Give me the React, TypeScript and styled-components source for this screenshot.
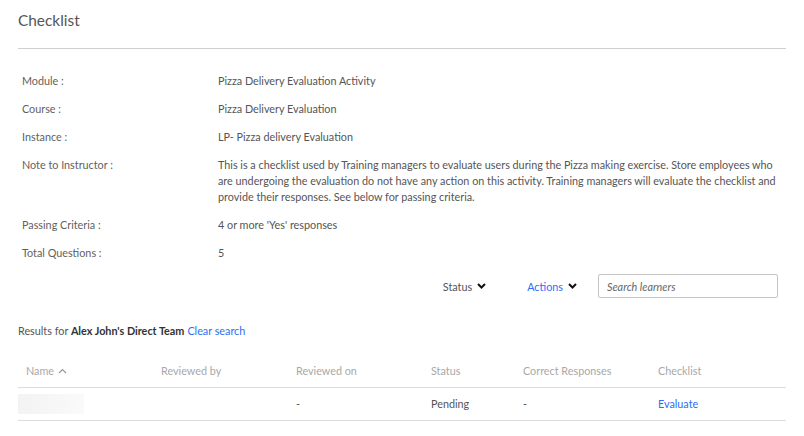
import React from 'react';
import styled, { createGlobalStyle } from 'styled-components';

const GlobalStyle = createGlobalStyle`
	body {
		margin: 0;
		background: #fff;
		font-family: 'Lato', 'Noto Sans', sans-serif;
		color: #555;
	}
`;

const Page = styled.div`
	padding: 0 18px;
	width: 768px;
`;

const Header = styled.div`
	height: 48px;
	border-bottom: 1px solid #cfcfcf;
	display: flex;
	align-items: center;
`;

const Title = styled.h1`
	margin: 0 0 8px;
	font-size: 15.4px;
	font-weight: 400;
	color: #555;
`;

const InfoGrid = styled.dl`
	margin: 24px 0 0 4px;
	display: grid;
	grid-template-columns: 196px 1fr;
	row-gap: 12px;
	font-size: 10.8px;
	line-height: 16px;
`;

const Label = styled.dt`
	color: #5f5f5f;
`;

const Value = styled.dd`
	margin: 0;
	color: #555;
`;

const Toolbar = styled.div`
	margin-top: 13px;
	display: flex;
	justify-content: flex-end;
	align-items: center;
	padding-right: 8px;
	font-size: 10.8px;
`;

const Dropdown = styled.button<{ $link?: boolean }>`
	border: none;
	background: none;
	padding: 0;
	font: inherit;
	display: flex;
	align-items: center;
	gap: 5px;
	color: ${(p) => (p.$link ? '#2f6df6' : '#555')};
	margin-right: ${(p) => (p.$link ? '21px' : '41px')};
	cursor: pointer;
`;

const SearchInput = styled.input`
	box-sizing: border-box;
	width: 180px;
	height: 24px;
	border: 1px solid #c4c4c4;
	border-radius: 2px;
	padding: 0 8px;
	font: italic 10.8px 'Lato', 'Noto Sans', sans-serif;
	color: #555;
	&::placeholder {
		color: #666;
	}
`;

const Results = styled.p`
	margin: 25px 0 0;
	font-size: 10.8px;
	line-height: 16px;
	color: #555;

	b {
		color: #333;
		font-weight: 700;
	}
`;

const ClearLink = styled.a`
	color: #2f6df6;
	text-decoration: none;
	margin-left: 3px;
`;

const Table = styled.table`
	margin-top: 15px;
	width: 768px;
	border-collapse: collapse;
	table-layout: fixed;
	font-size: 10.8px;
`;

const Th = styled.th`
	height: 33px;
	padding: 0 8px;
	text-align: left;
	font-weight: 400;
	color: #a8a8a8;
	border-bottom: 1px solid #dcdcdc;
`;

const Td = styled.td`
	height: 31px;
	padding: 0 8px 1px;
	color: #555;
	border-bottom: 1px solid #dcdcdc;
`;

const HiddenName = styled.div`
	margin-left: -8px;
	width: 66px;
	height: 20px;
	background: linear-gradient(90deg, #f3f3f3, #f7f7f7 60%, #fafafa);
	filter: blur(0.5px);
`;

const EvaluateLink = styled.a`
	color: #2f6df6;
	text-decoration: none;
`;

const HeadLabel = styled.span`
	display: inline-flex;
	align-items: center;
	gap: 4px;
`;

const Chevron = ({ up, color = '#111', width = 2 }: { up?: boolean; color?: string; width?: number }) => (
	<svg width="9" height="6" viewBox="0 0 9 6">
		<polyline
			points={up ? '1,5 4.5,1.5 8,5' : '1,1 4.5,4.5 8,1'}
			fill="none"
			stroke={color}
			strokeWidth={width}
		/>
	</svg>
);

const info: [string, React.ReactNode][] = [
	['Module :', 'Pizza Delivery Evaluation Activity'],
	['Course :', 'Pizza Delivery Evaluation'],
	['Instance :', 'LP- Pizza delivery Evaluation'],
	[
		'Note to Instructor :',
		'This is a checklist used by Training managers to evaluate users during the Pizza making exercise. Store employees who are undergoing the evaluation do not have any action on this activity. Training managers will evaluate the checklist and provide their responses. See below for passing criteria.',
	],
	['Passing Criteria :', "4 or more 'Yes' responses"],
	['Total Questions :', '5'],
];

const App = () => {
	return (
		<Page>
			<GlobalStyle />
			<Header>
				<Title>Checklist</Title>
			</Header>
			<InfoGrid>
				{info.map(([k, v]) => (
					<React.Fragment key={k}>
						<Label>{k}</Label>
						<Value>{v}</Value>
					</React.Fragment>
				))}
			</InfoGrid>
			<Toolbar>
				<Dropdown>
					Status <Chevron />
				</Dropdown>
				<Dropdown $link>
					Actions <Chevron />
				</Dropdown>
				<SearchInput placeholder="Search learners" />
			</Toolbar>
			<Results>
				Results for <b>Alex John's Direct Team</b>
				<ClearLink href="#">Clear search</ClearLink>
			</Results>
			<Table>
				<colgroup>
					<col style={{ width: 135 }} />
					<col style={{ width: 135 }} />
					<col style={{ width: 135 }} />
					<col style={{ width: 92 }} />
					<col style={{ width: 135 }} />
					<col />
				</colgroup>
				<thead>
					<tr>
						<Th>
							<HeadLabel>
								Name <Chevron up color="#999" width={1.2} />
							</HeadLabel>
						</Th>
						<Th>Reviewed by</Th>
						<Th>Reviewed on</Th>
						<Th>Status</Th>
						<Th>Correct Responses</Th>
						<Th>Checklist</Th>
					</tr>
				</thead>
				<tbody>
					<tr>
						<Td>
							<HiddenName />
						</Td>
						<Td />
						<Td>-</Td>
						<Td>Pending</Td>
						<Td>-</Td>
						<Td>
							<EvaluateLink href="#">Evaluate</EvaluateLink>
						</Td>
					</tr>
				</tbody>
			</Table>
		</Page>
	);
};

export default App;
